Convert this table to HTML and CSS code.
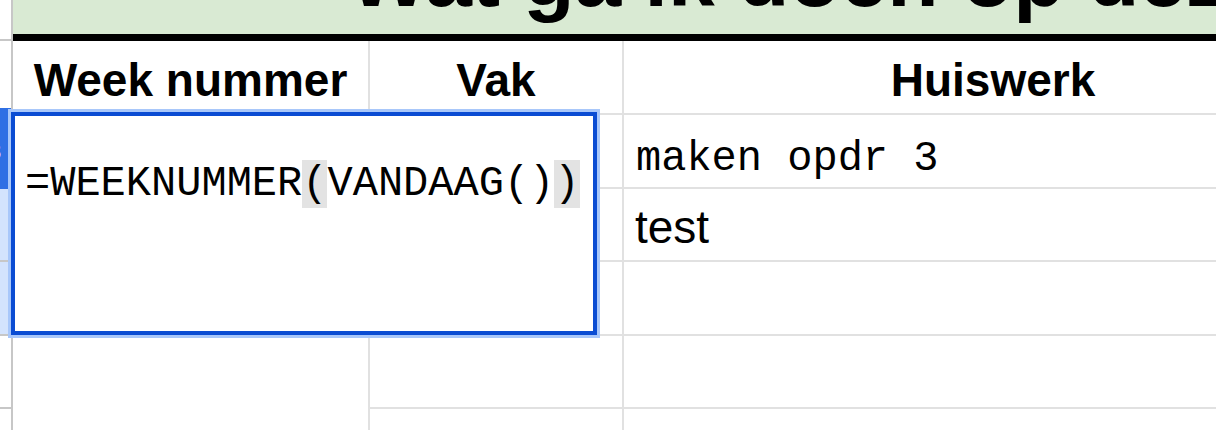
FILE: index.html
```html
<!DOCTYPE html>
<html>
<head>
<meta charset="utf-8">
<link rel="stylesheet" href="styles.css">
</head>
<body>
<div class="sheet">
  <div class="rowhead">
    <div class="rh rh-title"></div>
    <div class="rh rh-header"></div>
    <div class="rh rh-active"><span class="rh-num">3</span></div>
    <div class="rh rh-sel rh-line"></div>
    <div class="rh rh-sel rh-sel-last rh-line"></div>
    <div class="rh rh-line rh-r5"></div>
    <div class="rh rh-rest"></div>
  </div>
  <div class="main">
    <div class="title"><span class="title-text">Wat ga ik doen op deze dag?</span></div>
    <div class="grid">
      <div class="cell head col-a">Week nummer</div>
      <div class="cell head col-b">Vak</div>
      <div class="cell head col-c">Huiswerk</div>

      <div class="cell col-a merge3"></div>
      <div class="cell col-b"></div>
      <div class="cell col-c mono">maken opdr 3</div>

      <div class="cell col-b"></div>
      <div class="cell col-c plain">test</div>

      <div class="cell col-b"></div>
      <div class="cell col-c"></div>

      <div class="cell col-a merge-rest"></div>
      <div class="cell col-b"></div>
      <div class="cell col-c"></div>

      <div class="cell col-b"></div>
      <div class="cell col-c"></div>
    </div>
  </div>
  <div class="editor">
    <div class="formula">=WEEKNUMMER<span class="match">(</span>VANDAAG()<span class="match">)</span></div>
  </div>
</div>
</body>
</html>
```
FILE: styles.css
```css
* { box-sizing: border-box; }

html, body {
  margin: 0;
  padding: 0;
  background: #ffffff;
}

body {
  width: 1216px;
  height: 430px;
  overflow: hidden;
  font-family: "Liberation Sans", Arial, sans-serif;
  color: #000;
}

.sheet {
  position: relative;
  display: flex;
  width: 1216px;
  height: 430px;
  overflow: hidden;
}

/* row header strip */
.rowhead {
  width: 13px;
  flex: 0 0 13px;
  display: flex;
  flex-direction: column;
  border-right: 2px solid #c7c7c7;
}

.rh { width: 100%; flex-shrink: 0; }
.rh-line { border-bottom: 2px solid #c7c7c7; }

.rh-title {
  height: 41px;
  border-bottom: 2px solid #c7c7c7;
}
.rh-header { height: 67px; }
.rh-active {
  height: 81px;
  background: #2f6fe4;
  display: flex;
  align-items: center;
  overflow: hidden;
}
.rh-num {
  color: #ffffff;
  font-size: 22px;
  margin-left: -11px;
  margin-top: 6px;
}
.rh-sel { height: 73px; background: #d3e3fd; }
.rh-sel-last { height: 74px; }
.rh-r5 { height: 73px; }
.rh-rest { flex: 1 1 auto; }

/* main sheet area */
.main {
  flex: 1;
  display: flex;
  flex-direction: column;
  min-width: 0;
}

.title {
  flex: 0 0 41px;
  height: 41px;
  background: #d9ead3;
  border-bottom: 7px solid #000000;
  overflow: hidden;
  padding-left: 336px;
  white-space: nowrap;
}

.title-text {
  display: block;
  font-weight: bold;
  font-size: 84px;
  line-height: 84px;
  margin-top: -65px;
}

.grid {
  flex-shrink: 0;
  display: grid;
  grid-template-columns: 357px 254px 740px;
  grid-template-rows: 74px 74px 73px 74px 73px 74px;
}

.cell {
  border-right: 2px solid #e1e1e1;
  border-bottom: 2px solid #e1e1e1;
  display: flex;
  align-items: flex-end;
  white-space: nowrap;
  overflow: hidden;
}

.col-a { grid-column: 1; }
.col-b { grid-column: 2; }
.col-c { grid-column: 3; }

.merge3 { grid-row: span 3; }
.merge-rest { grid-row: span 2; border-bottom: none; }

.head {
  justify-content: center;
  font-weight: bold;
  font-size: 46px;
  line-height: 46px;
  padding-bottom: 10px;
}

.plain {
  font-size: 46px;
  line-height: 46px;
  padding-left: 11px;
  padding-bottom: 10px;
}

.mono {
  font-family: "Liberation Mono", "DejaVu Sans Mono", monospace;
  font-size: 42px;
  line-height: 42px;
  padding-left: 12px;
  padding-bottom: 7px;
}

/* in-cell formula editor, floating over the grid */
.editor {
  position: absolute;
  left: 11px;
  top: 112px;
  width: 586px;
  height: 223px;
  background: #ffffff;
  border: 4px solid #0a4cd3;
  box-shadow: 0 0 0 3px #a8c7fa;
  padding: 43px 0 0 10px;
}

.formula {
  font-family: "Liberation Mono", "DejaVu Sans Mono", monospace;
  font-size: 42px;
  line-height: 50px;
  white-space: nowrap;
}

.match {
  background: #e3e3e3;
}
```
